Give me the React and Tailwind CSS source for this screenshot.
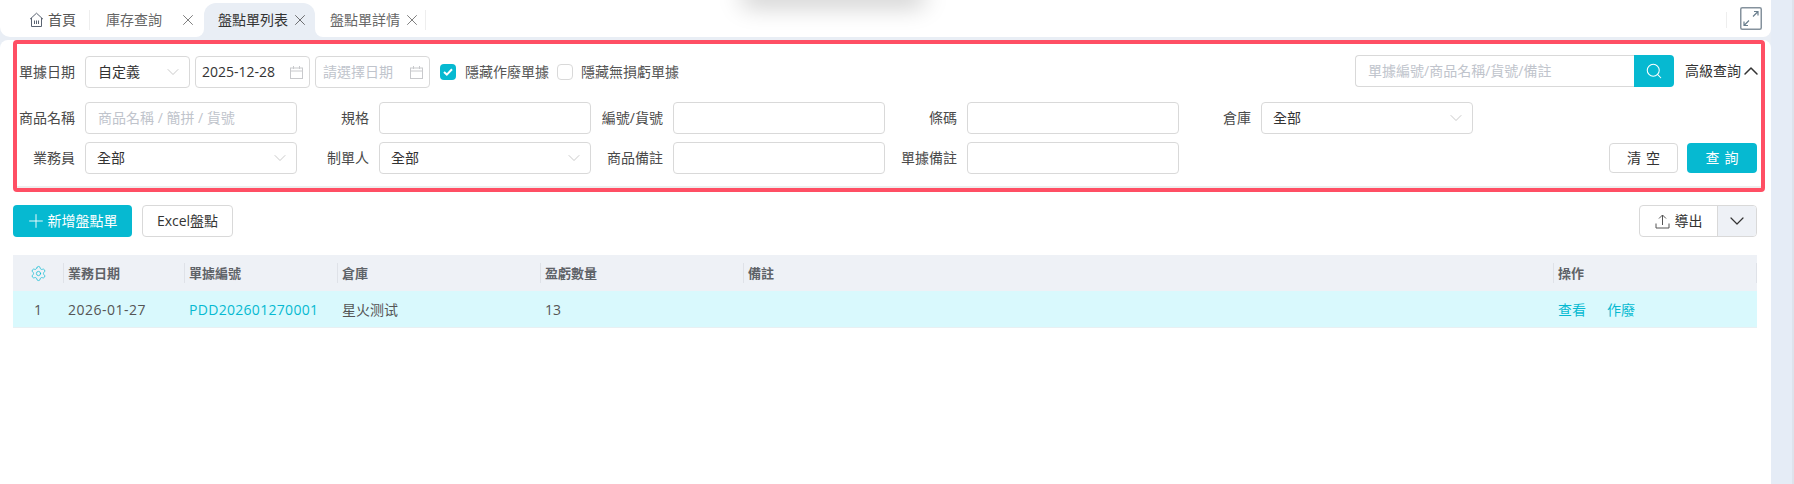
import React from "react";
import { X, ChevronDown, ChevronUp, Search, Settings, Plus } from "lucide-react";

const Home = () => (
  <svg width="15" height="16" viewBox="0 0 15 16" fill="none" stroke="#5b6472" strokeWidth="1">
    <path d="M1 7.2 7.5 1.2 14 7.2" strokeLinejoin="round" />
    <path d="M2.5 6v8.5h10V6" />
    <path d="M5.5 8.5v3.5M7.5 8.5v3.5M9.5 8.5v3.5" />
  </svg>
);

const Cal = () => (
  <svg width="13" height="13" viewBox="0 0 13 13" fill="none" stroke="#c8c9cc" strokeWidth="1">
    <rect x="0.5" y="2" width="12" height="10.5" />
    <path d="M0.5 5h12M3.5 0v3M9.5 0v3" />
  </svg>
);

const Sel = ({ w, text, pl = "pl-[11px]" }) => (
  <div className={`${w} h-8 flex items-center justify-between border border-[#d9d9d9] rounded-[4px] bg-white ${pl} text-[#333] shrink-0`}>
    <span>{text}</span>
    <ChevronDown size={20} strokeWidth={0.9} className="text-[#b8b8b8] mr-[6px]" />
  </div>
);

const Inp = ({ ph }) => (
  <div className="w-[212px] h-8 flex items-center border border-[#d9d9d9] rounded-[4px] bg-white pl-3 text-[#c0c4cc] shrink-0">
    {ph}
  </div>
);

const Field = ({ label, children }) => (
  <div className="flex items-center w-[294px] shrink-0">
    <div className="w-[58px] flex justify-end whitespace-nowrap text-[#4a4a4a] mr-[10px] shrink-0">{label}</div>
    {children}
  </div>
);

const HeadCell = ({ w, text }) => (
  <div className={`${w} h-full flex items-center shrink-0`}>
    <div className="w-px h-5 bg-[#dfe2e8] shrink-0" />
    <span className="pl-1 text-[13px] font-semibold text-[#5f6368]">{text}</span>
  </div>
);

export default function App() {
  return (
    <div className="relative w-[1794px] h-[484px] overflow-hidden flex bg-[#e5ecf6] text-[14px] leading-5 [font-family:'Open_Sans','Noto_Sans_CJK_TC',sans-serif]">
      <div className="absolute left-[741px] -top-5 w-[184px] h-5 bg-white rounded-lg shadow-[0_6px_24px_rgba(0,0,0,0.22)]" />
      <div className="w-[1771px] h-full flex flex-col shrink-0 bg-[#e9eef5]">
        <div className="h-[37px] flex items-end shrink-0 bg-white rounded-bl-[10px] rounded-br-[8px]">
          <div className="relative h-[34px] w-[204px] flex items-center shrink-0">
            <div className="ml-[29px] flex items-center"><Home /></div>
            <span className="ml-[4px] text-[#555]">首頁</span>
            <div className="w-px h-5 bg-[#eeeeee] ml-[13px]" />
            <span className="ml-[16px] text-[#666]">庫存查詢</span>
            <X size={18} strokeWidth={1} className="ml-[17px] text-[#555]" />
          </div>
          <div className="relative w-[111px] h-[34px] flex items-center bg-[#e9eef5] rounded-t-[12px] shrink-0 pl-[14px]">
            <div className="absolute bottom-0 -left-2 w-2 h-2 bg-[#e9eef5]"><div className="w-full h-full bg-white rounded-br-[8px]" /></div>
            <div className="absolute bottom-0 -right-2 w-2 h-2 bg-[#e9eef5]"><div className="w-full h-full bg-white rounded-bl-[8px]" /></div>
            <span className="text-[#333]">盤點單列表</span>
            <X size={18} strokeWidth={1} className="ml-[3px] text-[#444]" />
          </div>
          <div className="h-[34px] flex items-center flex-1">
            <span className="ml-[15px] text-[#666]">盤點單詳情</span>
            <X size={18} strokeWidth={1} className="ml-[3px] text-[#555]" />
            <div className="w-px h-5 bg-[#eeeeee] ml-[4px]" />
            <div className="ml-auto w-px h-4 bg-[#eeeeee] mr-[13px]" />
            <div className="mr-[9px] mb-[3px] flex">
              <svg width="22" height="23" viewBox="0 0 22 23" fill="none" stroke="#85929d" strokeWidth="1.5">
                <rect x="0.75" y="0.75" width="20.5" height="21.5" rx="1.5" />
                <path d="M13 9.5 18 4.5M14 4.5h4v4M9 13.5 4 18.5M8 18.5H4v-4" stroke="#6a7f8e" strokeWidth="1.2" />
              </svg>
            </div>
          </div>
        </div>
        <div className="mt-[3px] flex-1 bg-white rounded-t-[8px] pl-[13px]">
          <div className="w-[1752px] h-[152px] border-4 border-[#ff4f64] rounded-[4px] bg-white flex flex-col">
            <div className="flex items-center h-8 mt-3 pr-[4px] shrink-0">
              <div className="w-[58px] flex justify-end whitespace-nowrap text-[#4a4a4a] mr-[10px]">單據日期</div>
              <Sel w="w-[105px]" text="自定義" pl="pl-3" />
              <div className="ml-[5px] w-[115px] h-8 flex items-center justify-between border border-[#d9d9d9] rounded-[4px] pl-[6px] pr-[6px] text-[#333]">
                <span>2025-12-28</span><Cal />
              </div>
              <div className="ml-[5px] w-[115px] h-8 flex items-center justify-between border border-[#d9d9d9] rounded-[4px] pl-[7px] pr-[6px] text-[#c0c4cc]">
                <span>請選擇日期</span><Cal />
              </div>
              <div className="ml-[10px] w-4 h-4 rounded-[4px] bg-[#06b9d1] flex items-center justify-center">
                <svg width="10" height="8" viewBox="0 0 10 8" fill="none" stroke="#fff" strokeWidth="2"><path d="M1 4 3.8 6.6 9 1.2" /></svg>
              </div>
              <span className="ml-[9px] text-[#555]">隱藏作廢單據</span>
              <div className="ml-[8px] w-4 h-4 rounded-[4px] border border-[#d9d9d9] bg-white" />
              <span className="ml-[8px] text-[#555]">隱藏無損虧單據</span>
              <div className="ml-auto flex items-center -mt-[2px]">
                <div className="w-[279px] h-8 flex items-center border border-r-0 border-[#d9d9d9] rounded-l-[4px] pl-3 text-[#c0c4cc]">單據編號/商品名稱/貨號/備註</div>
                <div className="w-10 h-8 flex items-center justify-center bg-[#06b9d1] rounded-r-[4px]">
                  <Search size={18} strokeWidth={1.4} className="text-white" />
                </div>
                <span className="ml-[11px] text-[#333]">高級查詢</span>
                <ChevronUp size={24} strokeWidth={1.5} className="-ml-[2px] -mr-[6px] text-[#333]" />
              </div>
            </div>
            <div className="flex mt-[14px] shrink-0">
              <Field label="商品名稱"><Inp ph="商品名稱 / 簡拼 / 貨號" /></Field>
              <Field label="規格"><Inp /></Field>
              <Field label="編號/貨號"><Inp /></Field>
              <Field label="條碼"><Inp /></Field>
              <Field label="倉庫"><Sel w="w-[212px]" text="全部" /></Field>
            </div>
            <div className="flex items-center mt-2 pr-[4px] shrink-0">
              <Field label="業務員"><Sel w="w-[212px]" text="全部" /></Field>
              <Field label="制單人"><Sel w="w-[212px]" text="全部" /></Field>
              <Field label="商品備註"><Inp /></Field>
              <Field label="單據備註"><Inp /></Field>
              <div className="ml-auto flex items-center">
                <div className="w-[69px] h-[30px] flex items-center justify-center border border-[#d9d9d9] rounded-[4px] text-[#333] tracking-[5px] pl-[5px]">清空</div>
                <div className="ml-[9px] w-[70px] h-[30px] flex items-center justify-center bg-[#06b9d1] rounded-[4px] text-white tracking-[5px] pl-[5px]">查詢</div>
              </div>
            </div>
            <div className="mt-auto h-[2px] bg-[#eeeeee]" />
          </div>
          <div className="flex items-center mt-[13px] w-[1744px]">
            <div className="w-[119px] h-8 flex items-center justify-center bg-[#06b9d1] rounded-[4px] text-white">
              <Plus size={22} strokeWidth={1} className="-ml-[3px] mr-[1px]" />
              <span>新增盤點單</span>
            </div>
            <div className="ml-[10px] w-[91px] h-8 flex items-center justify-center border border-[#d9d9d9] rounded-[4px] text-[#333]">Excel盤點</div>
            <div className="ml-auto w-[118px] h-8 flex border border-[#d9d9d9] rounded-[4px] overflow-hidden">
              <div className="w-[77px] flex items-center justify-center text-[#333]">
                <svg width="15" height="15" viewBox="0 0 15 15" fill="none" stroke="#555" strokeWidth="1" className="mr-[5px]">
                  <path d="M7.5 11V1M4 4.5 7.5 1 11 4.5M1 9.5V14h13V9.5" />
                </svg>
                <span>導出</span>
              </div>
              <div className="flex-1 flex items-center justify-center bg-[#eef1f6] border-l border-[#d9d9d9]">
                <ChevronDown size={24} strokeWidth={1.2} className="text-[#333]" />
              </div>
            </div>
          </div>
          <div className="mt-[18px] w-[1744px]">
            <div className="h-9 flex items-center bg-[#eef1f6]">
              <div className="w-[50px] h-full flex items-center justify-center shrink-0">
                <Settings size={17} strokeWidth={1} className="text-[#06b9d1]" />
              </div>
              <HeadCell w="w-[121px]" text="業務日期" />
              <HeadCell w="w-[153px]" text="單據編號" />
              <HeadCell w="w-[203px]" text="倉庫" />
              <HeadCell w="w-[203px]" text="盈虧數量" />
              <HeadCell w="w-[810px]" text="備註" />
              <HeadCell w="w-[203px]" text="操作" />
              <div className="w-px h-5 bg-[#dfe2e8]" />
            </div>
            <div className="h-[37px] flex items-center bg-[#d9f9fd] border-b border-[#e8f0f3] text-[#555] pt-[2px]">
              <div className="w-[50px] text-center shrink-0">1</div>
              <div className="w-[121px] pl-[5px] shrink-0 tracking-[0.5px]">2026-01-27</div>
              <div className="w-[153px] pl-[5px] shrink-0 text-[#06b9d1] tracking-[0.3px]">PDD202601270001</div>
              <div className="w-[203px] pl-[5px] shrink-0">星火测试</div>
              <div className="w-[203px] pl-[5px] shrink-0">13</div>
              <div className="w-[810px] shrink-0" />
              <div className="pl-[5px] text-[#06b9d1]">查看</div>
              <div className="pl-[21px] text-[#06b9d1]">作廢</div>
            </div>
          </div>
        </div>
      </div>
      <div className="w-[21px] h-full shrink-0" />
      <div className="w-[2px] h-full shrink-0 bg-[#dde3ec]" />
    </div>
  );
}
